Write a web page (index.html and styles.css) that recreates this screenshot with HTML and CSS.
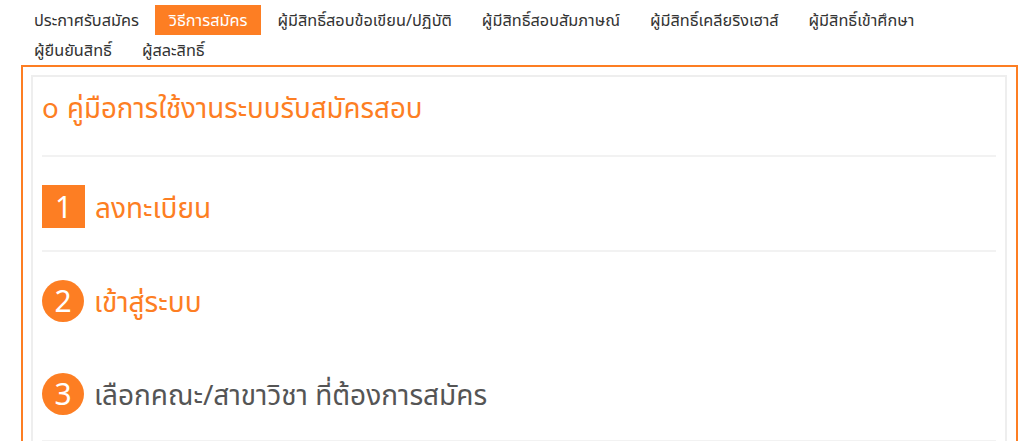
FILE: index.html
```html
<!DOCTYPE html>
<html lang="th">
<head>
<meta charset="utf-8">
<title>วิธีการสมัคร</title>
<link rel="stylesheet" href="styles.css">
</head>
<body>
<nav class="tabs">
  <a class="tab">ประกาศรับสมัคร</a>
  <a class="tab active">วิธีการสมัคร</a>
  <a class="tab">ผู้มีสิทธิ์สอบข้อเขียน/ปฏิบัติ</a>
  <a class="tab">ผู้มีสิทธิ์สอบสัมภาษณ์</a>
  <a class="tab">ผู้มีสิทธิ์เคลียริงเฮาส์</a>
  <a class="tab">ผู้มีสิทธิ์เข้าศึกษา</a>
  <a class="tab">ผู้ยืนยันสิทธิ์</a>
  <a class="tab">ผู้สละสิทธิ์</a>
</nav>
<section class="frame">
  <div class="panel">
    <h2 class="title"><span class="ring">o</span> คู่มือการใช้งานระบบรับสมัครสอบ</h2>
    <div class="step step-1">
      <span class="num square">1</span>
      <span class="label orange">ลงทะเบียน</span>
    </div>
    <div class="step step-2">
      <span class="num circle">2</span>
      <span class="label orange">เข้าสู่ระบบ</span>
    </div>
    <div class="step step-3">
      <span class="num circle">3</span>
      <span class="label dark">เลือกคณะ/สาขาวิชา ที่ต้องการสมัคร</span>
    </div>
  </div>
</section>
</body>
</html>
```
FILE: styles.css
```css
* { box-sizing: border-box; }
body {
  margin: 0;
  background: #fff;
  font-family: "Noto Sans", "Noto Sans Thai", sans-serif;
  color: #333;
}
.tabs {
  display: flex;
  flex-wrap: wrap;
  padding: 5px 0 0 20px;
  width: 1000px;
}
.tab {
  display: block;
  padding: 0 14px;
  margin-right: 2px;
  height: 30px;
  line-height: 30px;
  font-size: 16.3px;
  color: #333;
  white-space: nowrap;
}
.tab.active {
  background: #fd7e23;
  color: #fff;
}
.frame {
  margin: 0 0 0 21px;
  width: 997px;
  border: 2px solid #fd7e23;
  padding: 8px 9px 0 8px;
}
.panel {
  border: 2px solid #eeeeee;
  border-bottom: none;
  padding: 0 9px 0 9px;
}
.title {
  margin: 0;
  padding: 13px 0 31px;
  font-size: 27.7px;
  line-height: 34px;
  font-weight: normal;
  color: #fd7e23;
  border-bottom: 2px solid #f2f2f2;
}
.ring { margin-right: 1px; }
.step {
  display: flex;
  align-items: center;
  gap: 10px;
}
.step-1 { padding: 28px 0 22px; border-bottom: 2px solid #f2f2f2; }
.step-2 { padding: 28px 0 25px; }
.step-3 { padding: 26px 0 25px; border-bottom: 2px solid #f2f2f2; }
.num {
  display: flex;
  align-items: center;
  justify-content: center;
  background: #fd7e23;
  color: #fff;
  font-size: 30px;
  line-height: 1;
  flex: none;
}
.square { width: 43px; height: 43px; }
.circle { width: 42px; height: 42px; border-radius: 50%; }
.label {
  font-size: 28px;
  line-height: 36px;
}
.orange { color: #fd7e23; }
.dark { color: #555; }
```
